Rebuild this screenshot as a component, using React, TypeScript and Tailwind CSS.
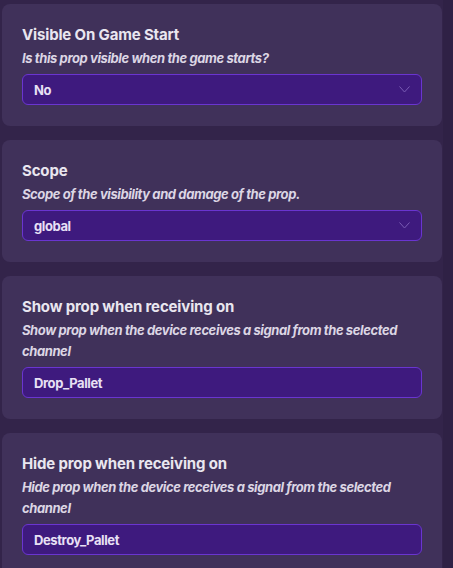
import React from 'react';

type Field = {
  title: string;
  description: string;
  value: string;
  dropdown?: boolean;
};

const fields: Field[] = [
  { title: 'Visible On Game Start', description: 'Is this prop visible when the game starts?', value: 'No', dropdown: true },
  { title: 'Scope', description: 'Scope of the visibility and damage of the prop.', value: 'global', dropdown: true },
  {
    title: 'Show prop when receiving on',
    description: 'Show prop when the device receives a signal from the selected channel',
    value: 'Drop_Pallet',
  },
  {
    title: 'Hide prop when receiving on',
    description: 'Hide prop when the device receives a signal from the selected channel',
    value: 'Destroy_Pallet',
  },
];

const Chevron = () => (
  <svg width="11" height="7" viewBox="0 0 11 7" fill="none" className="shrink-0">
    <path d="M0.5 0.5L5.5 6L10.5 0.5" stroke="#7a5cb4" strokeWidth="1" />
  </svg>
);

const FieldCard: React.FC<{ field: Field }> = ({ field }) => (
  <div className="w-[440px] ml-[2px] rounded-lg bg-[#40315a] px-5 pt-5 pb-[21px]">
    <h3 className="text-[15px] leading-[22px] font-bold text-[#e9e6ef] tracking-[-0.15px]">{field.title}</h3>
    <p className="mt-[2px] text-[13px] leading-[21px] font-bold italic text-[#dcd6e4] tracking-[-0.4px] pr-4">
      {field.description}
    </p>
    <div className="mt-[5px] h-[31px] rounded-md border border-[#6a35d0] bg-[#3e1a7e] flex items-center justify-between pl-[11px] pr-[11px]">
      <span className="pt-[2px] text-[13px] font-bold text-[#e8e0f5] tracking-[-0.4px]">{field.value}</span>
      {field.dropdown && <Chevron />}
    </div>
  </div>
);

export default function App() {
  return (
    <div className="w-[453px] h-[568px] overflow-hidden flex bg-[#33244a] font-['Inter',sans-serif]">
      <div className="w-[443px] flex flex-col gap-[14px] pt-[4px]">
        {fields.map((f) => (
          <FieldCard key={f.title} field={f} />
        ))}
      </div>
      <div className="w-[10px] bg-[#2f2145]" />
    </div>
  );
}
